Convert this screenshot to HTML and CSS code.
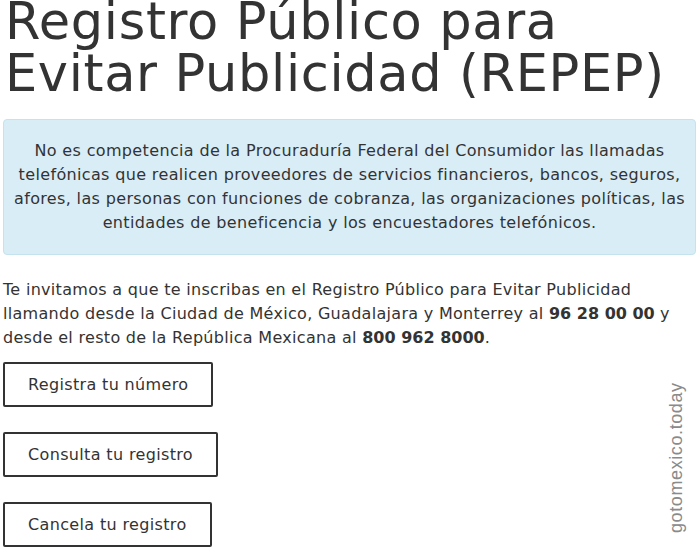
FILE: index.html
```html
<!DOCTYPE html>
<html>
<head>
  <title>REPEP</title>
  <link rel="stylesheet" href="styles.css">
</head>
<body>
  <div class="page">
    <h1 class="title">Registro Público para<br>Evitar Publicidad (REPEP)</h1>
    <div class="notice">
      No es competencia de la Procuraduría Federal del Consumidor las llamadas<br>
      telefónicas que realicen proveedores de servicios financieros, bancos, seguros,<br>
      afores, las personas con funciones de cobranza, las organizaciones políticas, las<br>
      entidades de beneficencia y los encuestadores telefónicos.
    </div>
    <p class="intro">Te invitamos a que te inscribas en el Registro Público para Evitar Publicidad<br>
      llamando desde la Ciudad de México, Guadalajara y Monterrey al <b>96 28 00 00</b> y<br>
      desde el resto de la República Mexicana al <b>800 962 8000</b>.</p>
    <div class="actions">
      <a class="btn" href="#">Registra tu número</a>
      <a class="btn" href="#">Consulta tu registro</a>
      <a class="btn" href="#">Cancela tu registro</a>
    </div>
  </div>
  <div class="watermark">gotomexico.today</div>
</body>
</html>
```

FILE: styles.css
```css
body {
  margin: 0;
  font-family: "DejaVu Sans", sans-serif;
  color: #333333;
  background: #FFFFFF;
  overflow: hidden;
}
.page {
  padding: 0 4px 0 3px;
}
h1.title {
  font-size: 51px;
  font-weight: normal;
  line-height: 52px;
  letter-spacing: 0.65px;
  margin: 0 0 0 2px;
  padding-top: 1px;
  height: 99px;
  display: flex;
  flex-direction: column;
  justify-content: flex-end;
  white-space: nowrap;
}
.notice {
  margin-top: 19px;
  background-color: #d9edf7;
  border: 1px solid #c4e3ee;
  border-radius: 4px;
  padding: 19px 4px;
  text-align: center;
  font-size: 16px;
  line-height: 24px;
  letter-spacing: 0.35px;
  white-space: nowrap;
}
p.intro {
  margin: 23px 0 12px;
  font-size: 16px;
  line-height: 24px;
  letter-spacing: 0.3px;
  white-space: nowrap;
}
p.intro b {
  font-weight: bold;
  letter-spacing: 0;
}
.actions {
  display: flex;
  flex-direction: column;
  align-items: flex-start;
  gap: 25px;
}
.btn {
  display: inline-block;
  padding: 9px 23px 8px;
  border: 2px solid #333333;
  border-radius: 2px;
  font-size: 16px;
  line-height: 24px;
  letter-spacing: 0.35px;
  color: #333333;
  text-decoration: none;
}
.watermark {
  position: absolute;
  left: 665px;
  top: 533px;
  transform: rotate(-90deg);
  transform-origin: 0 0;
  font-family: "Liberation Sans", Arial, sans-serif;
  font-size: 18px;
  letter-spacing: 0.6px;
  color: #8a8a8a;
  white-space: nowrap;
  line-height: 22px;
}
```
